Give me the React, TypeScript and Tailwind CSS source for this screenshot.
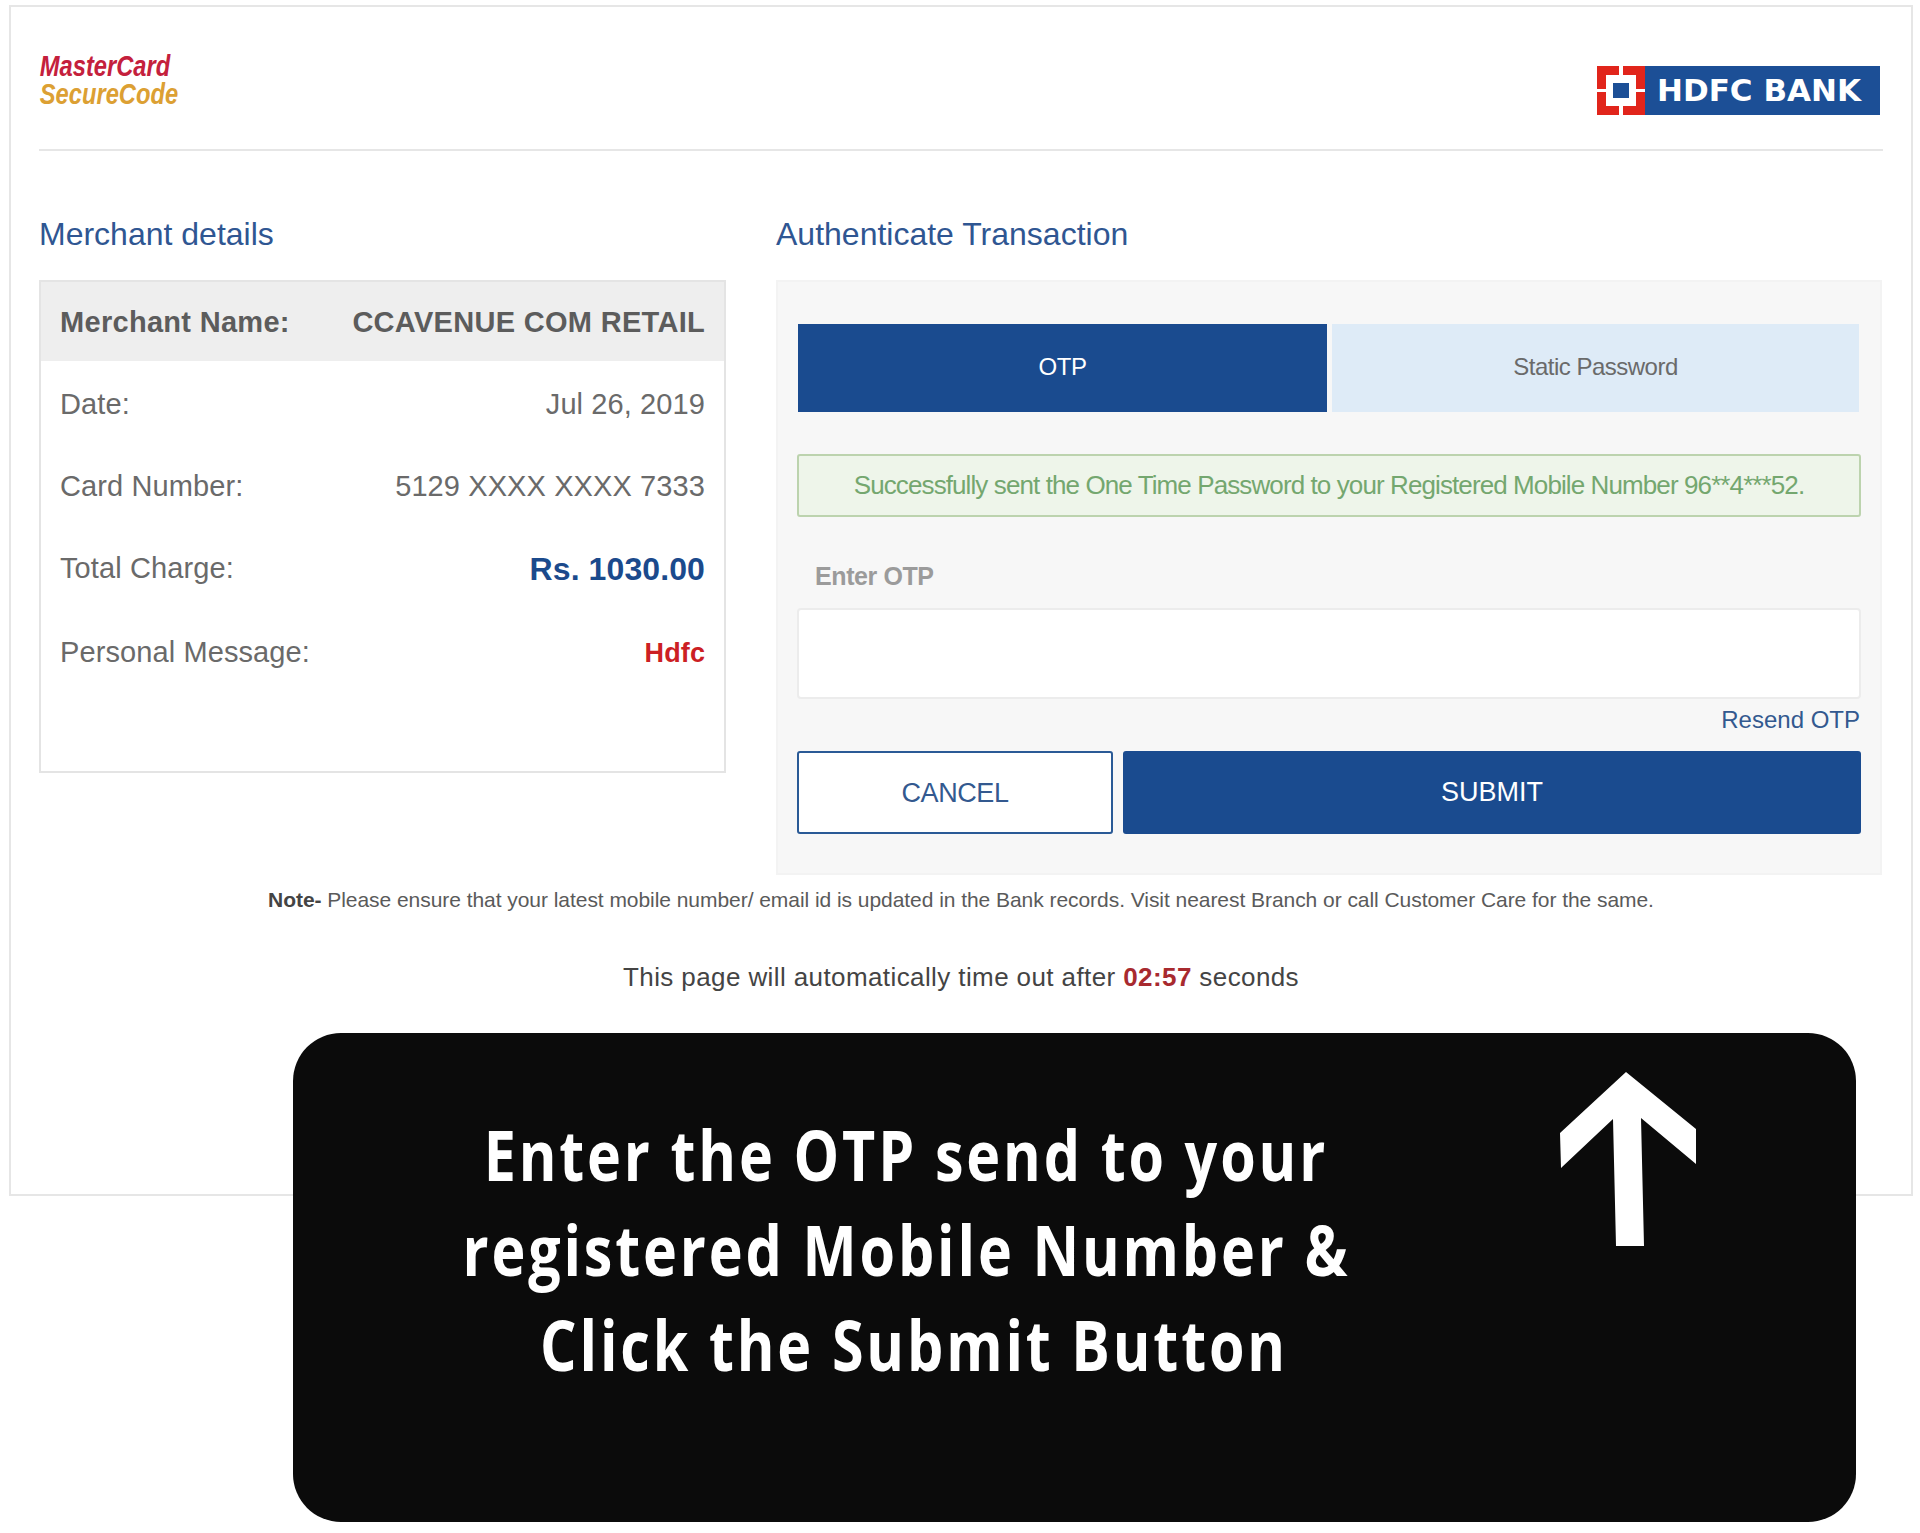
const sans = "font-['Liberation_Sans',Arial,sans-serif]";

function HdfcLogo() {
  return (
    <div className="flex h-[49px] w-[283px] items-center bg-[#1c4f96]">
      <svg width="48" height="49" viewBox="0 0 48 49" className="shrink-0">
        <rect width="48" height="49" fill="#e1251b" />
        <rect x="9" y="9" width="30" height="31" fill="#fff" />
        <rect x="16" y="17" width="16" height="15" fill="#1c4f96" />
        <rect x="22" y="0" width="4" height="10" fill="#fff" />
        <rect x="22" y="39" width="4" height="10" fill="#fff" />
        <rect x="0" y="23" width="10" height="3" fill="#fff" />
        <rect x="38" y="23" width="10" height="3" fill="#fff" />
      </svg>
      <span className="ml-[12px] font-['DejaVu_Sans',sans-serif] text-[31px] leading-none font-bold text-white">
        HDFC BANK
      </span>
    </div>
  );
}

function Row({ label, children, h }: { label: string; children: React.ReactNode; h: string }) {
  return (
    <div className={`flex items-center justify-between pt-[3px] pr-[19px] pl-[19px] text-[29px] tracking-[0.1px] text-[#6a6a6a] ${h}`}>
      <span>{label}</span>
      {children}
    </div>
  );
}

export default function App() {
  return (
    <div className={`h-[1533px] w-[1920px] overflow-hidden bg-white pt-[5px] pl-[9px] ${sans}`}>
      <div className="h-[1191px] w-[1904px] border-2 border-[#e6e6e6] px-[28px]">
        <header className="flex h-[144px] items-start justify-between border-b-2 border-[#e6e6e6] pr-[1px]">
          <div className="mt-[45px] origin-left scale-x-[0.79] pl-[1px] text-[30px] leading-[28px] font-bold italic">
            <div className="text-[#c4203c]">MasterCard</div>
            <div className="text-[#dca033]">SecureCode</div>
          </div>
          <div className="mt-[59px] mr-[2px]">
            <HdfcLogo />
          </div>
        </header>

        <div className="flex">
          <section className="w-[737px] shrink-0">
            <h2 className="mt-[63px] h-[66px] text-[32px] leading-[40px] font-normal text-[#2f5692]">Merchant details</h2>
            <div className="h-[493px] w-[687px] border-2 border-[#e4e4e4]">
              <div className="flex h-[79px] items-center justify-between bg-[#eeeeee] pt-[3px] pr-[19px] pl-[19px] text-[29px] font-bold tracking-[0.3px] text-[#5c5c5c]">
                <span>Merchant Name:</span>
                <span>CCAVENUE COM RETAIL</span>
              </div>
              <Row label="Date:" h="h-[84px]">
                <span>Jul 26, 2019</span>
              </Row>
              <Row label="Card Number:" h="h-[80px]">
                <span>5129 XXXX XXXX 7333</span>
              </Row>
              <Row label="Total Charge:" h="h-[84px]">
                <span className="text-[32px] font-bold text-[#1b4a8c]">Rs. 1030.00</span>
              </Row>
              <Row label="Personal Message:" h="h-[85px]">
                <span className="text-[27px] font-bold text-[#cc1f24]">Hdfc</span>
              </Row>
            </div>
          </section>

          <section className="w-[1106px] shrink-0">
            <h2 className="mt-[63px] h-[66px] text-[32px] leading-[40px] font-normal text-[#2f5692]">Authenticate Transaction</h2>
            <div className="h-[595px] border-2 border-[#f3f3f3] bg-[#f7f7f7] pt-[42px] pr-[19px] pl-[19px]">
              <div className="ml-[1px] flex h-[88px] gap-[5px] pr-[2px] text-[24px] tracking-[-0.5px]">
                <div className="flex w-[529px] items-center justify-center bg-[#1a4b8f] pb-[3px] text-white">OTP</div>
                <div className="flex flex-1 items-center justify-center bg-[#deebf7] pb-[3px] text-[#6a6a6a]">Static Password</div>
              </div>
              <div className="mt-[42px] flex h-[63px] items-center justify-center rounded-[3px] border-2 border-[#bcd3ae] bg-[#eef5ea] text-[26px] tracking-[-0.9px] text-[#74a76f]">
                Successfully sent the One Time Password to your Registered Mobile Number 96**4***52.
              </div>
              <div className="mt-[42px] pl-[18px] text-[25px] leading-[34px] font-bold tracking-[-0.4px] text-[#9b9b9b]">Enter OTP</div>
              <div className="mt-[15px] h-[91px] rounded-[4px] border-2 border-[#ececec] bg-white" />
              <div className="mt-[6px] h-[46px] pr-[1px] text-right text-[24px] leading-[30px] tracking-[0px] text-[#33598f]">Resend OTP</div>
              <div className="flex h-[83px] gap-[10px] text-[27px]">
                <div className="flex w-[316px] items-center justify-center rounded-[3px] border-2 border-[#2a5a96] bg-white pt-[2px] tracking-[-0.4px] text-[#33598f]">CANCEL</div>
                <div className="flex flex-1 items-center justify-center rounded-[3px] bg-[#1a4b8f] tracking-[0px] text-white">SUBMIT</div>
              </div>
            </div>
          </section>
        </div>

        <p className="mt-[13px] text-center text-[21px] leading-[24px] tracking-[-0.05px] text-[#5a5a5a]">
          <b className="text-[#444]">Note-</b> Please ensure that your latest mobile number/ email id is updated in the Bank records. Visit nearest Branch or call Customer Care for the same.
        </p>
        <p className="mt-[49px] text-center text-[26px] leading-[32px] tracking-[0.4px] text-[#444]">
          This page will automatically time out after <b className="text-[#a82a2f]">02:57</b> seconds
        </p>
      </div>

      <div className="relative -mt-[163px] ml-[284px] flex h-[489px] w-[1563px] rounded-[48px] bg-[#0b0b0b]">
        <div className="flex w-[1226px] shrink-0 flex-col items-center pt-[74px] font-['Open_Sans',sans-serif] text-[70px] leading-[95px] font-bold tracking-[3.5px] text-white">
          <div className="scale-x-[0.82] whitespace-nowrap">Enter the OTP send to your</div>
          <div className="scale-x-[0.82] whitespace-nowrap">registered Mobile Number &amp;</div>
          <div className="ml-[16px] scale-x-[0.82] whitespace-nowrap">Click the Submit Button</div>
        </div>
        <svg width="140" height="180" viewBox="0 0 140 180" className="mt-[39px] ml-[41px] shrink-0">
          <polygon fill="#fff" points="66,0 136,57 136,92 81,46 84,174 56,174 53,47 1,96 0,61" />
        </svg>
      </div>
    </div>
  );
}
